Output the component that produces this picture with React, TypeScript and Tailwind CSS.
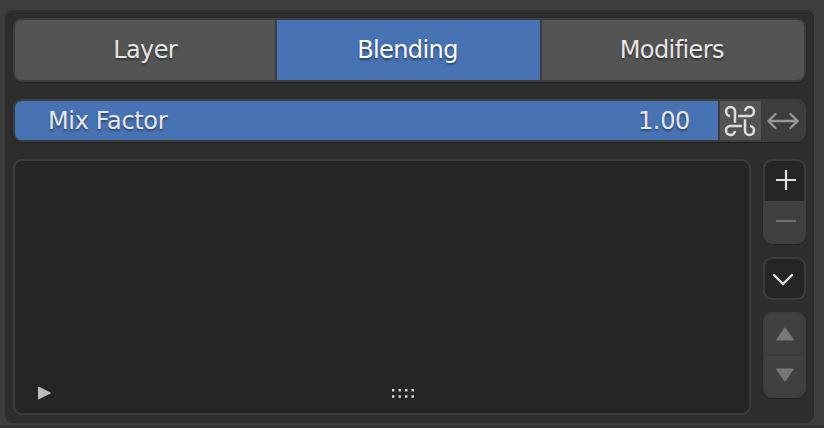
import { useState } from 'react';

const tabs = [
  { name: 'Layer', width: 'w-[261px]' },
  { name: 'Blending', width: 'w-[263px] pr-0.5' },
  { name: 'Modifiers', width: 'w-[263px] pr-0.5' },
];

function LinkIcon() {
  const loop = 'M12 18.8V7.5A4.5 4.5 0 1 0 7 11.95';
  return (
    <svg width="34" height="34" viewBox="0 0 34 34" fill="none" stroke="#dedede" strokeWidth="2.5">
      <path d={loop} />
      <path d={loop} transform="rotate(90 17 17)" />
      <path d={loop} transform="rotate(180 17 17)" />
      <path d={loop} transform="rotate(270 17 17)" />
    </svg>
  );
}

function ArrowsIcon() {
  return (
    <svg width="32" height="18" viewBox="0 0 32 18" fill="none" stroke="#979797" strokeWidth="2.3" strokeLinecap="round">
      <path d="M2 9H30M8.5 2L1.5 9L8.5 16M23.5 2L30.5 9L23.5 16" />
    </svg>
  );
}

export default function App() {
  const [active, setActive] = useState('Blending');

  return (
    <div
      className="h-[428px] w-[824px] bg-[#3d3d3d] pl-[5px] pt-[10px] text-[24px] text-[#e6e6e6]"
      style={{ fontFamily: '"DejaVu Sans", sans-serif' }}
    >
      <div className="h-[413px] w-[809px] rounded-lg bg-[#2d2d2d] px-2 pt-2">
        <div className="flex h-16 gap-0.5 overflow-hidden rounded-[9px] border-2 border-[#3d3d3d] bg-[#3d3d3d] tracking-[-0.6px] shadow-[0_1px_1px_#242424]">
          {tabs.map((tab) => (
            <button
              key={tab.name}
              onClick={() => setActive(tab.name)}
              className={`${tab.width} [text-shadow:0_2px_2px_rgba(0,0,0,0.4)] ${
                active === tab.name ? 'bg-[#4772b3] text-white' : 'bg-[#545454]'
              }`}
            >
              {tab.name}
            </button>
          ))}
        </div>

        <div className="mt-[17px] flex h-[43px] overflow-hidden rounded-[9px] border-2 border-[#3d3d3d] bg-[#3d3d3d] shadow-[0_1px_1px_#242424]">
          <div className="flex w-[703px] items-center justify-between bg-[#4772b3] pl-[33px] pr-7 pt-px tracking-[-0.35px] [text-shadow:0_2px_2px_rgba(0,0,0,0.4)]">
            <span>Mix Factor</span>
            <span>1.00</span>
          </div>
          <button className="ml-0.5 flex w-[41px] items-center justify-center bg-[#545454] pr-px">
            <LinkIcon />
          </button>
          <button className="flex flex-1 items-center justify-center pl-px">
            <ArrowsIcon />
          </button>
        </div>

        <div className="mt-[17px] flex justify-between">
          <div className="flex h-64 w-[738px] items-end rounded-[9px] border-2 border-[#3d3d3d] bg-[#252525] pb-[13px] pl-[23px]">
            <svg width="14" height="14" viewBox="0 0 14 14" fill="#bdbdbd">
              <path d="M0 1.2Q0 .4 1 .8L12.4 6.4Q13.4 7 12.4 7.6L1 13.2Q0 13.6 0 12.8Z" />
            </svg>
            <svg className="ml-[339px]" width="24" height="12" viewBox="0 0 24 12" fill="#dcdcdc">
              {[1, 7.5, 14, 20.5].map((x) => (
                <g key={x}>
                  <rect x={x} y="1" width="2.4" height="2.4" />
                  <rect x={x} y="7.3" width="2.4" height="2.4" />
                </g>
              ))}
            </svg>
          </div>

          <div className="flex w-[43px] flex-col">
            <button className="flex h-[42px] items-center justify-center rounded-t-[9px] border-2 border-b-0 border-[#3d3d3d] bg-[#252525] pb-[3px] pl-0.5">
              <svg width="22" height="22" viewBox="0 0 22 22" stroke="#dedede" strokeWidth="2.2">
                <path d="M1 11H21M11 1V21" />
              </svg>
            </button>
            <button className="flex h-[43px] items-center justify-center rounded-b-[9px] bg-[#3f3f3f] pb-[3px] pl-0.5 shadow-[0_1px_1px_#242424]">
              <svg width="22" height="22" viewBox="0 0 22 22" stroke="#707070" strokeWidth="2.2">
                <path d="M1 11H21" />
              </svg>
            </button>
            <button className="mt-[13px] flex h-[43px] items-center justify-center rounded-[9px] border-2 border-[#3d3d3d] bg-[#252525] pr-[3px]">
              <svg width="22" height="14" viewBox="0 0 22 14" fill="none" stroke="#dedede" strokeWidth="2.4" strokeLinecap="round">
                <path d="M2 3L11 12L20 3" />
              </svg>
            </button>
            <div className="mt-3 flex h-[86px] flex-col rounded-[9px] border-2 border-[#3d3d3d] bg-[#404040] shadow-[0_1px_1px_#242424]">
              <button className="flex h-10 items-center justify-center">
                <svg width="18" height="14" viewBox="0 0 18 14" fill="#777777">
                  <path d="M8.4 .8Q9 0 9.6 .8L17.7 12.6Q18 13.6 17 13.6H1Q0 13.6 .3 12.6Z" />
                </svg>
              </button>
              <button className="flex flex-1 items-center justify-center border-t-2 border-[#393939] pb-0.5">
                <svg width="18" height="14" viewBox="0 0 18 14" fill="#777777">
                  <path d="M8.4 13.2Q9 14 9.6 13.2L17.7 1.4Q18 .4 17 .4H1Q0 .4 .3 1.4Z" />
                </svg>
              </button>
            </div>
          </div>
        </div>
      </div>
      <div className="mt-0.5 -ml-[5px] h-[3px] w-[824px] bg-[#353535]" />
    </div>
  );
}
